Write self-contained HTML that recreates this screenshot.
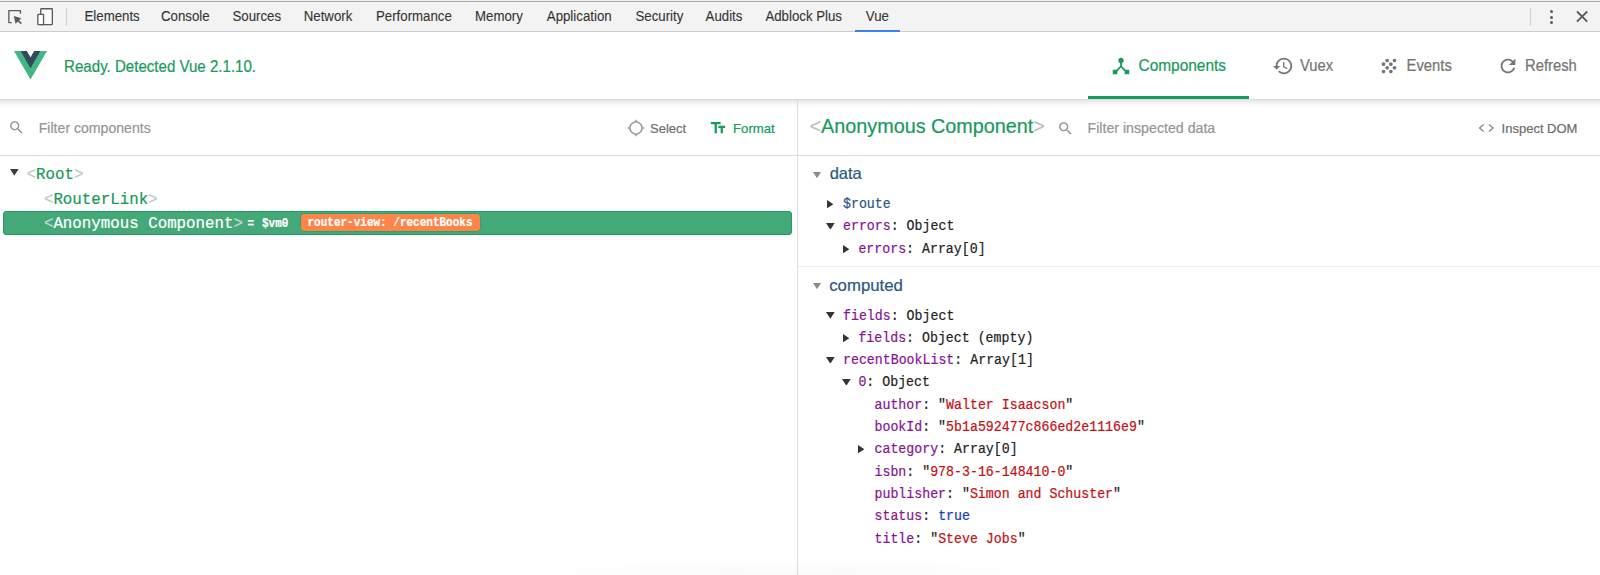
<!DOCTYPE html><html><head><meta charset="utf-8"><title>Vue devtools</title><style>html,body{margin:0;padding:0;width:1600px;height:575px;overflow:hidden;background:#fff;position:relative}body *{box-sizing:content-box}.t{position:absolute;white-space:pre;line-height:1;-webkit-text-stroke-width:0.2px}</style></head><body>
<div style="position:absolute;left:0px;top:0px;width:1600px;height:31px;background:#f3f3f3"></div>
<div style="position:absolute;left:0px;top:1px;width:1600px;height:1px;background:#a8a8a8"></div>
<div style="position:absolute;left:0px;top:31px;width:1600px;height:1px;background:#cdcdcd"></div>
<svg style="position:absolute;left:0px;top:0px" width="70" height="32" viewBox="0 0 70 32"><path d="M11.7 22.55 H8.85 V10.65 H20.45 V13.8" fill="none" stroke="#5a5a5a" stroke-width="1.3" stroke-linejoin="round"/>
<path d="M13.8 16.1 L21.4 18.2 L15.5 23.7 Z" fill="#5a5a5a"/><path d="M17.2 19.6 L21.3 23.6" stroke="#5a5a5a" stroke-width="1.5"/>
<rect x="40.75" y="8.75" width="11.6" height="15.9" fill="#fbfbfb" stroke="#5a5a5a" stroke-width="1.3" rx="0.6"/>
<rect x="37.85" y="14.35" width="5.7" height="10.3" fill="#ffffff" stroke="#5a5a5a" stroke-width="1.3" rx="0.4"/></svg>
<div style="position:absolute;left:66px;top:8px;width:1px;height:18px;background:#cccccc"></div>
<div style="position:absolute;left:855px;top:30px;width:45px;height:2px;background:#3b82f0"></div>
<div style="position:absolute;left:1530px;top:8px;width:1px;height:18px;background:#cccccc"></div>
<div style="position:absolute;left:1550.0px;top:10.1px;width:3px;height:3px;border-radius:50%;background:#5a5a5a"></div>
<div style="position:absolute;left:1550.0px;top:15.75px;width:3px;height:3px;border-radius:50%;background:#5a5a5a"></div>
<div style="position:absolute;left:1550.0px;top:21.35px;width:3px;height:3px;border-radius:50%;background:#5a5a5a"></div>
<svg style="position:absolute;left:1572px;top:7px" width="20" height="20" viewBox="0 0 20 20"><path d="M5 4.5 L15.2 14.7 M15.2 4.5 L5 14.7" stroke="#5a5a5a" stroke-width="1.8"/></svg>
<div style="position:absolute;left:0px;top:99px;width:1600px;height:1px;background:#dcdcdc"></div>
<svg style="position:absolute;left:13.6px;top:51.15px" width="33" height="28.6" viewBox="0 0 261.76 226.69"><path d="M161.096.001l-30.225 52.351L100.647.001H-.005l130.877 226.688L261.749.001z" fill="#41b883"/><path d="M161.096.001l-30.225 52.351L100.647.001H52.346l78.526 136.01L209.398.001z" fill="#35495e"/></svg>
<svg style="position:absolute;left:1110.25px;top:54.7px" width="22" height="22" viewBox="0 0 24 24"><path d="M17 16l-4-4V8.82C14.16 8.4 15 7.3 15 6c0-1.66-1.34-3-3-3S9 4.34 9 6c0 1.3.84 2.4 2 2.82V12l-4 4H3v5h5v-3.05l4-4.2 4 4.2V21h5v-5h-4z" fill="#179a5c"/></svg>
<svg style="position:absolute;left:1272px;top:54.7px" width="22" height="22" viewBox="0 0 24 24"><path d="M13 3c-4.97 0-9 4.03-9 9H1l3.89 3.89.07.14L9 12H6c0-3.87 3.13-7 7-7s7 3.13 7 7-3.13 7-7 7c-1.93 0-3.68-.79-4.94-2.06l-1.42 1.42C8.27 19.99 10.51 21 13 21c4.97 0 9-4.03 9-9s-4.03-9-9-9zm-1 5v5l4.28 2.54.72-1.21-3.5-2.08V8H12z" fill="#757575"/></svg>
<svg style="position:absolute;left:1378.4px;top:54.7px" width="22" height="22" viewBox="0 0 24 24"><path d="M10 12c-1.1 0-2 .9-2 2s.9 2 2 2 2-.9 2-2-.9-2-2-2zM6 8c-1.1 0-2 .9-2 2s.9 2 2 2 2-.9 2-2-.9-2-2-2zm0 8c-1.1 0-2 .9-2 2s.9 2 2 2 2-.9 2-2-.9-2-2-2zm12-8c1.1 0 2-.9 2-2s-.9-2-2-2-2 .9-2 2 .9 2 2 2zm-4 8c-1.1 0-2 .9-2 2s.9 2 2 2 2-.9 2-2-.9-2-2-2zm4-4c-1.1 0-2 .9-2 2s.9 2 2 2 2-.9 2-2-.9-2-2-2zm-4-4c-1.1 0-2 .9-2 2s.9 2 2 2 2-.9 2-2-.9-2-2-2zm-4-4c-1.1 0-2 .9-2 2s.9 2 2 2 2-.9 2-2-.9-2-2-2z" fill="#757575"/></svg>
<svg style="position:absolute;left:1496.6px;top:54.7px" width="22" height="22" viewBox="0 0 24 24"><path d="M17.65 6.35C16.2 4.9 14.21 4 12 4c-4.42 0-7.99 3.58-7.99 8s3.57 8 7.99 8c3.73 0 6.84-2.55 7.73-6h-2.08c-.82 2.33-3.04 4-5.65 4-3.31 0-6-2.69-6-6s2.69-6 6-6c1.66 0 3.14.69 4.22 1.78L13 11h7V4l-2.35 2.35z" fill="#757575"/></svg>
<div style="position:absolute;left:1088px;top:96px;width:161px;height:3px;background:#179a5c"></div>
<div style="position:absolute;left:0px;top:155px;width:797px;height:1px;background:#dedede"></div>
<div style="position:absolute;left:798px;top:155px;width:802px;height:1px;background:#dedede"></div>
<div style="position:absolute;left:0;top:100px;width:1600px;height:8px;background:linear-gradient(#e5e5e5,#f2f2f2 35%,#f9f9f9 62%,rgba(255,255,255,0))"></div>
<div style="position:absolute;left:797px;top:100px;width:1px;height:475px;background:#dcdcdc"></div>
<svg style="position:absolute;left:8.06px;top:119.3px" width="17" height="17" viewBox="0 0 24 24"><path d="M15.5 14h-.79l-.28-.27C15.41 12.59 16 11.11 16 9.5 16 5.91 13.09 3 9.5 3S3 5.91 3 9.5 5.91 16 9.5 16c1.61 0 3.09-.59 4.23-1.57l.27.28v.79l5 4.99L20.49 19l-4.99-5zm-6 0C7.01 14 5 11.99 5 9.5S7.01 5 9.5 5 14 7.01 14 9.5 11.99 14 9.5 14z" fill="#929292"/></svg>
<svg style="position:absolute;left:626.85px;top:119.15px" width="18" height="18" viewBox="0 0 24 24"><path d="M20.94 11c-.46-4.17-3.77-7.48-7.94-7.94V1h-2v2.06C6.83 3.52 3.52 6.83 3.06 11H1v2h2.06c.46 4.17 3.77 7.48 7.94 7.94V23h2v-2.06c4.17-.46 7.48-3.77 7.94-7.94H23v-2h-2.06zM12 19c-3.87 0-7-3.13-7-7s3.13-7 7-7 7 3.13 7 7-3.13 7-7 7z" fill="#9a9a9a"/></svg>
<svg style="position:absolute;left:709.2px;top:118.8px" width="18" height="18" viewBox="0 0 24 24"><path d="M2.5 4v3h5v12h3V7h5V4h-13zm19 5h-9v3h3v7h3v-7h3V9z" fill="#179a5c"/></svg>
<svg style="position:absolute;left:1056.6px;top:119.76px" width="17" height="17" viewBox="0 0 24 24"><path d="M15.5 14h-.79l-.28-.27C15.41 12.59 16 11.11 16 9.5 16 5.91 13.09 3 9.5 3S3 5.91 3 9.5 5.91 16 9.5 16c1.61 0 3.09-.59 4.23-1.57l.27.28v.79l5 4.99L20.49 19l-4.99-5zm-6 0C7.01 14 5 11.99 5 9.5S7.01 5 9.5 5 14 7.01 14 9.5 11.99 14 9.5 14z" fill="#929292"/></svg>
<svg style="position:absolute;left:1476px;top:118px" width="20" height="20" viewBox="0 0 20 20"><path d="M7.7 6.5 L3.5 10 L7.7 13.5 M13 6.5 L17.2 10 L13 13.5" fill="none" stroke="#888888" stroke-width="1.25"/></svg>
<div style="position:absolute;left:500px;top:556px;width:580px;height:40px;border-radius:50%;background:radial-gradient(ellipse at center, rgba(0,0,0,0.025), rgba(0,0,0,0) 70%)"></div>
<svg style="position:absolute;left:10.3px;top:169px" width="8.6" height="6.7"><path d="M0 0 H8.6 L4.3 6.7 Z" fill="#3c3c3c"/></svg>
<div style="position:absolute;left:2.5px;top:211px;width:789px;height:24px;box-sizing:border-box;border:1px solid #1f9e62;border-radius:3px;background:#44a878"></div>
<div style="position:absolute;left:299.5px;top:213px;width:181px;height:19px;box-sizing:border-box;border:1px solid #2aa46c;border-radius:4px;background:#ff8449"></div>
<svg style="position:absolute;left:813.4px;top:171.8px" width="8" height="6.2"><path d="M0 0 H8 L4.0 6.2 Z" fill="#8a8a8a"/></svg>
<svg style="position:absolute;left:827px;top:199.6px" width="6.4" height="8.3"><path d="M0 0 L6.4 4.15 L0 8.3 Z" fill="#333"/></svg>
<svg style="position:absolute;left:826.4px;top:222.6px" width="8.7" height="6.7"><path d="M0 0 H8.7 L4.35 6.7 Z" fill="#333"/></svg>
<svg style="position:absolute;left:843px;top:244.5px" width="6.4" height="8.3"><path d="M0 0 L6.4 4.15 L0 8.3 Z" fill="#333"/></svg>
<div style="position:absolute;left:798px;top:266px;width:802px;height:1px;background:#eeeeee"></div>
<svg style="position:absolute;left:813.4px;top:283px" width="8" height="6.2"><path d="M0 0 H8 L4.0 6.2 Z" fill="#8a8a8a"/></svg>
<svg style="position:absolute;left:826.4px;top:311.9px" width="8.7" height="6.7"><path d="M0 0 H8.7 L4.35 6.7 Z" fill="#333"/></svg>
<svg style="position:absolute;left:843px;top:333.5px" width="6.4" height="8.3"><path d="M0 0 L6.4 4.15 L0 8.3 Z" fill="#333"/></svg>
<svg style="position:absolute;left:826.4px;top:356.5px" width="8.7" height="6.7"><path d="M0 0 H8.7 L4.35 6.7 Z" fill="#333"/></svg>
<svg style="position:absolute;left:842.4px;top:378.79999999999995px" width="8.7" height="6.7"><path d="M0 0 H8.7 L4.35 6.7 Z" fill="#333"/></svg>
<svg style="position:absolute;left:858.3px;top:445.0px" width="6.4" height="8.3"><path d="M0 0 L6.4 4.15 L0 8.3 Z" fill="#333"/></svg>
<div class="t" style="left:84.5px;top:10.00px;font-family:'Liberation Sans', sans-serif;font-size:13.25px;color:#333333;transform:scaleY(1.07);transform-origin:0 11px;-webkit-text-stroke-width:0.1px">Elements</div>
<div class="t" style="left:161px;top:10.00px;font-family:'Liberation Sans', sans-serif;font-size:13.25px;color:#333333;transform:scaleY(1.07);transform-origin:0 11px;-webkit-text-stroke-width:0.1px">Console</div>
<div class="t" style="left:232.5px;top:10.00px;font-family:'Liberation Sans', sans-serif;font-size:13.25px;color:#333333;transform:scaleY(1.07);transform-origin:0 11px;-webkit-text-stroke-width:0.1px">Sources</div>
<div class="t" style="left:303.75px;top:10.00px;font-family:'Liberation Sans', sans-serif;font-size:13.25px;color:#333333;transform:scaleY(1.07);transform-origin:0 11px;-webkit-text-stroke-width:0.1px">Network</div>
<div class="t" style="left:376px;top:10.00px;font-family:'Liberation Sans', sans-serif;font-size:13.25px;color:#333333;transform:scaleY(1.07);transform-origin:0 11px;-webkit-text-stroke-width:0.1px">Performance</div>
<div class="t" style="left:475px;top:10.00px;font-family:'Liberation Sans', sans-serif;font-size:13.25px;color:#333333;transform:scaleY(1.07);transform-origin:0 11px;-webkit-text-stroke-width:0.1px">Memory</div>
<div class="t" style="left:546.8px;top:10.00px;font-family:'Liberation Sans', sans-serif;font-size:13.25px;color:#333333;transform:scaleY(1.07);transform-origin:0 11px;-webkit-text-stroke-width:0.1px">Application</div>
<div class="t" style="left:635.5px;top:10.00px;font-family:'Liberation Sans', sans-serif;font-size:13.25px;color:#333333;transform:scaleY(1.07);transform-origin:0 11px;-webkit-text-stroke-width:0.1px">Security</div>
<div class="t" style="left:705.6px;top:10.00px;font-family:'Liberation Sans', sans-serif;font-size:13.25px;color:#333333;transform:scaleY(1.07);transform-origin:0 11px;-webkit-text-stroke-width:0.1px">Audits</div>
<div class="t" style="left:765.4px;top:10.00px;font-family:'Liberation Sans', sans-serif;font-size:13.25px;color:#333333;transform:scaleY(1.07);transform-origin:0 11px;-webkit-text-stroke-width:0.1px">Adblock Plus</div>
<div class="t" style="left:865.8px;top:10.00px;font-family:'Liberation Sans', sans-serif;font-size:13.25px;color:#333333;transform:scaleY(1.07);transform-origin:0 11px;-webkit-text-stroke-width:0.1px">Vue</div>
<div class="t" style="left:64.1px;top:59.00px;font-family:'Liberation Sans', sans-serif;font-size:15.08px;color:#179a5c;transform:scaleY(1.07);transform-origin:0 13px">Ready. Detected Vue 2.1.10.</div>
<div class="t" style="left:1138.5px;top:58.00px;font-family:'Liberation Sans', sans-serif;font-size:15.45px;color:#179a5c;transform:scaleY(1.1);transform-origin:0 13px">Components</div>
<div class="t" style="left:1300px;top:59.00px;font-family:'Liberation Sans', sans-serif;font-size:14.8px;color:#757575;transform:scaleY(1.1);transform-origin:0 13px">Vuex</div>
<div class="t" style="left:1406.6px;top:59.00px;font-family:'Liberation Sans', sans-serif;font-size:14.8px;color:#757575;transform:scaleY(1.1);transform-origin:0 13px">Events</div>
<div class="t" style="left:1525px;top:59.00px;font-family:'Liberation Sans', sans-serif;font-size:14.8px;color:#757575;transform:scaleY(1.1);transform-origin:0 13px">Refresh</div>
<div class="t" style="left:38.75px;top:120.50px;font-family:'Liberation Sans', sans-serif;font-size:14.1px;color:#959595;">Filter components</div>
<div class="t" style="left:650px;top:121.50px;font-family:'Liberation Sans', sans-serif;font-size:13px;color:#6d6d6d;">Select</div>
<div class="t" style="left:733px;top:121.50px;font-family:'Liberation Sans', sans-serif;font-size:13.2px;color:#179a5c;">Format</div>
<div class="t" style="left:809.5px;top:117.00px;font-family:'Liberation Sans', sans-serif;font-size:19.8px;color:#179a5c;"><span style="color:#bdbdbd">&lt;</span>Anonymous Component<span style="color:#bdbdbd">&gt;</span></div>
<div class="t" style="left:1087.5px;top:120.50px;font-family:'Liberation Sans', sans-serif;font-size:14.2px;color:#959595;">Filter inspected data</div>
<div class="t" style="left:1501.6px;top:121.60px;font-family:'Liberation Sans', sans-serif;font-size:13px;color:#6d6d6d;">Inspect DOM</div>
<div class="t" style="left:26.6px;top:168.00px;font-family:'Liberation Mono', monospace;font-size:15.8px;color:#179a5c;transform:scaleY(1.08);transform-origin:0 11px;"><span style="color:#c4c4c4">&lt;</span>Root<span style="color:#c4c4c4">&gt;</span></div>
<div class="t" style="left:43.9px;top:192.50px;font-family:'Liberation Mono', monospace;font-size:15.8px;color:#179a5c;transform:scaleY(1.08);transform-origin:0 11px;"><span style="color:#c4c4c4">&lt;</span>RouterLink<span style="color:#c4c4c4">&gt;</span></div>
<div class="t" style="left:43.9px;top:217.40px;font-family:'Liberation Mono', monospace;font-size:15.8px;color:#ffffff;transform:scaleY(1.08);transform-origin:0 11px;"><span style="color:#cfd8d3">&lt;</span>Anonymous Component<span style="color:#cfd8d3">&gt;</span></div>
<div class="t" style="left:247.5px;top:219.00px;font-family:'Liberation Mono', monospace;font-size:11px;color:#ffffff;transform:scaleY(1.08);transform-origin:0 8px;font-weight:bold">=</div>
<div class="t" style="left:262px;top:219.00px;font-family:'Liberation Mono', monospace;font-size:11px;color:#ffffff;transform:scaleY(1.08);transform-origin:0 8px;font-weight:bold">$vm0</div>
<div class="t" style="left:307.5px;top:218.20px;font-family:'Liberation Mono', monospace;font-size:11px;color:#ffffff;transform:scaleY(1.08);transform-origin:0 8px;font-weight:bold">router-view: /recentBooks</div>
<div class="t" style="left:829.7px;top:165.00px;font-family:'Liberation Sans', sans-serif;font-size:16.5px;color:#2a5882;">data</div>
<div class="t" style="left:843px;top:198.00px;font-family:'Liberation Mono', monospace;font-size:13.25px;color:#2a5882;transform:scaleY(1.08);transform-origin:0 10px;">$route</div>
<div class="t" style="left:843px;top:220.00px;font-family:'Liberation Mono', monospace;font-size:13.25px;color:#222222;transform:scaleY(1.08);transform-origin:0 10px;"><span style="color:#881391">errors</span>: Object</div>
<div class="t" style="left:858.4px;top:242.80px;font-family:'Liberation Mono', monospace;font-size:13.25px;color:#222222;transform:scaleY(1.08);transform-origin:0 10px;"><span style="color:#881391">errors</span>: Array[0]</div>
<div class="t" style="left:829.2px;top:277.50px;font-family:'Liberation Sans', sans-serif;font-size:16.8px;color:#2a5882;">computed</div>
<div class="t" style="left:843px;top:309.50px;font-family:'Liberation Mono', monospace;font-size:13.25px;color:#222222;transform:scaleY(1.08);transform-origin:0 10px;"><span style="color:#881391">fields</span>: Object</div>
<div class="t" style="left:858.4px;top:331.80px;font-family:'Liberation Mono', monospace;font-size:13.25px;color:#222222;transform:scaleY(1.08);transform-origin:0 10px;"><span style="color:#881391">fields</span>: Object (empty)</div>
<div class="t" style="left:843px;top:354.10px;font-family:'Liberation Mono', monospace;font-size:13.25px;color:#222222;transform:scaleY(1.08);transform-origin:0 10px;"><span style="color:#881391">recentBookList</span>: Array[1]</div>
<div class="t" style="left:858.4px;top:376.40px;font-family:'Liberation Mono', monospace;font-size:13.25px;color:#222222;transform:scaleY(1.08);transform-origin:0 10px;"><span style="color:#881391">0</span>: Object</div>
<div class="t" style="left:874.5px;top:398.70px;font-family:'Liberation Mono', monospace;font-size:13.25px;color:#222222;transform:scaleY(1.08);transform-origin:0 10px;"><span style="color:#881391">author</span>: "<span style="color:#c40f14">Walter Isaacson</span>"</div>
<div class="t" style="left:874.5px;top:421.00px;font-family:'Liberation Mono', monospace;font-size:13.25px;color:#222222;transform:scaleY(1.08);transform-origin:0 10px;"><span style="color:#881391">bookId</span>: "<span style="color:#c40f14">5b1a592477c866ed2e1116e9</span>"</div>
<div class="t" style="left:874.5px;top:443.30px;font-family:'Liberation Mono', monospace;font-size:13.25px;color:#222222;transform:scaleY(1.08);transform-origin:0 10px;"><span style="color:#881391">category</span>: Array[0]</div>
<div class="t" style="left:874.5px;top:465.60px;font-family:'Liberation Mono', monospace;font-size:13.25px;color:#222222;transform:scaleY(1.08);transform-origin:0 10px;"><span style="color:#881391">isbn</span>: "<span style="color:#c40f14">978-3-16-148410-0</span>"</div>
<div class="t" style="left:874.5px;top:487.90px;font-family:'Liberation Mono', monospace;font-size:13.25px;color:#222222;transform:scaleY(1.08);transform-origin:0 10px;"><span style="color:#881391">publisher</span>: "<span style="color:#c40f14">Simon and Schuster</span>"</div>
<div class="t" style="left:874.5px;top:510.20px;font-family:'Liberation Mono', monospace;font-size:13.25px;color:#222222;transform:scaleY(1.08);transform-origin:0 10px;"><span style="color:#881391">status</span>: <span style="color:#0d3bcc">true</span></div>
<div class="t" style="left:874.5px;top:532.50px;font-family:'Liberation Mono', monospace;font-size:13.25px;color:#222222;transform:scaleY(1.08);transform-origin:0 10px;"><span style="color:#881391">title</span>: "<span style="color:#c40f14">Steve Jobs</span>"</div>
</body></html>
